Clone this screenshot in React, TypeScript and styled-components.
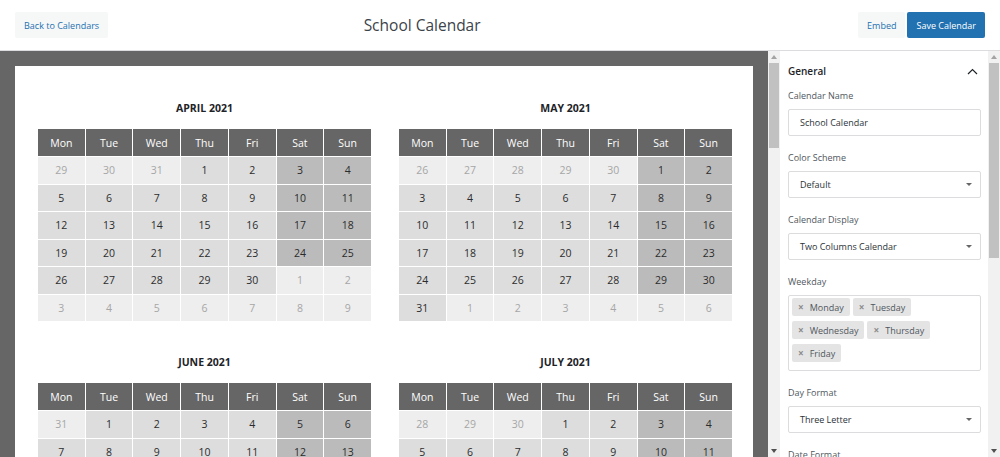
import React from "react";
import styled, { createGlobalStyle } from "styled-components";

const GlobalStyle = createGlobalStyle`
  html, body { margin: 0; padding: 0; }
  body {
    font-family: "Open Sans", "Liberation Sans", sans-serif;
    background: #fff;
    overflow: hidden;
  }
  * { box-sizing: border-box; }
`;

const Page = styled.div`
  width: 1000px;
  height: 457px;
  display: flex;
  flex-direction: column;
  overflow: hidden;
`;

const TopBar = styled.header`
  height: 51px;
  flex: none;
  display: flex;
  align-items: center;
  padding: 0 15px;
  border-bottom: 1px solid #dcdcde;
  background: #fff;
`;

const Button = styled.button<{ $primary?: boolean }>`
  height: 26px;
  padding: 0 9px;
  border: none;
  border-radius: 2px;
  font-family: "Open Sans", "Liberation Sans", sans-serif;
  font-size: 9px;
  background: ${(p) => (p.$primary ? "#2271b1" : "#f6f7f7")};
  color: ${(p) => (p.$primary ? "#ffffff" : "#2271b1")};
  cursor: pointer;
`;

const Title = styled.h1`
  flex: 1;
  margin: 0;
  padding-right: 122px;
  text-align: center;
  font-size: 15.5px;
  font-weight: 500;
  color: #3c434a;
`;

const ButtonGroup = styled.div`
  display: flex;
  gap: 2px;
`;

const Main = styled.div`
  flex: 1;
  display: flex;
  min-height: 0;
`;

const Preview = styled.div`
  flex: 1;
  background: #666666;
  padding: 15px 15px 0;
  overflow: hidden;
`;

const Paper = styled.div`
  background: #fff;
  min-height: 100%;
  padding: 34px 21px 40px 23px;
  display: grid;
  grid-template-columns: 1fr 1fr;
  column-gap: 28px;
  row-gap: 33px;
`;

const MonthBlock = styled.section``;

const MonthTitle = styled.h2`
  margin: 0 0 13px;
  text-align: center;
  font-size: 10.5px;
  line-height: 16px;
  font-weight: 700;
  color: #1d2327;
`;

const CalGrid = styled.div`
  display: grid;
  grid-template-columns: repeat(7, 1fr);
  gap: 1px;
  background: #fff;
`;

const HeadCell = styled.div`
  height: 27px;
  background: #666666;
  color: #fff;
  font-size: 10.5px;
  display: flex;
  align-items: center;
  justify-content: center;
`;

const DayCell = styled.div<{ $cur: boolean; $weekend: boolean }>`
  height: 26.5px;
  display: flex;
  align-items: center;
  justify-content: center;
  font-size: 10.5px;
  background: ${(p) => (!p.$cur ? "#eeeeee" : p.$weekend ? "#bbbbbb" : "#dddddd")};
  color: ${(p) => (p.$cur ? "#2c2c2c" : "#a6a6a6")};
`;

const ScrollTrack = styled.div`
  width: 12px;
  flex: none;
  background: #f1f1f1;
  display: flex;
  flex-direction: column;
`;

const ScrollButton = styled.div`
  height: 12px;
  flex: none;
  display: flex;
  align-items: center;
  justify-content: center;
`;

const ScrollThumb = styled.div<{ $size: number }>`
  height: ${(p) => p.$size}px;
  flex: none;
  margin: 0 1px;
  background: #c1c1c1;
`;

const ScrollSpacer = styled.div`
  flex: 1;
`;

const Sidebar = styled.aside`
  width: 208px;
  flex: none;
  background: #fff;
  padding: 12px 7px 0 8px;
  overflow: hidden;
`;

const PanelHeader = styled.div`
  display: flex;
  align-items: center;
  justify-content: space-between;
  height: 16px;
  margin-bottom: 10px;
  font-size: 10px;
  font-weight: 600;
  color: #1d2327;
  padding-right: 3px;
`;

const Field = styled.div`
  margin-bottom: 15px;
`;

const Label = styled.div`
  font-size: 9px;
  line-height: 14px;
  color: #50575e;
  margin-bottom: 6px;
`;

const TextInput = styled.input`
  display: block;
  width: 100%;
  height: 27px;
  border: 1px solid #dcdcde;
  border-radius: 2px;
  padding: 0 11px;
  font-family: "Open Sans", "Liberation Sans", sans-serif;
  font-size: 9px;
  color: #2c3338;
  background: #fff;
  outline: none;
`;

const SelectBox = styled.div`
  height: 27px;
  border: 1px solid #dcdcde;
  border-radius: 2px;
  padding: 0 8px 0 11px;
  display: flex;
  align-items: center;
  justify-content: space-between;
  font-size: 9px;
  color: #2c3338;
`;

const Caret = styled.span`
  width: 0;
  height: 0;
  border-left: 3px solid transparent;
  border-right: 3px solid transparent;
  border-top: 3px solid #666;
`;

const MultiBox = styled.div`
  height: 76px;
  margin-top: 1px;
  border: 1px solid #dcdcde;
  border-radius: 2px;
  padding: 2px 3px;
  display: flex;
  flex-wrap: wrap;
  align-content: flex-start;
  gap: 5px 3px;
`;

const Tag = styled.span`
  height: 18px;
  display: inline-flex;
  align-items: center;
  gap: 6px;
  padding: 0 6px;
  background: #e4e4e4;
  border-radius: 2px;
  font-size: 9px;
  color: #50575e;
`;

const TagX = styled.span`
  font-size: 10px;
  font-weight: 700;
  color: #8c8c8c;
`;

type Day = { n: number; cur: boolean; weekend: boolean };

function buildMonth(year: number, month: number): Day[] {
  const first = new Date(year, month, 1);
  const offset = (first.getDay() + 6) % 7;
  const dim = new Date(year, month + 1, 0).getDate();
  const prevDim = new Date(year, month, 0).getDate();
  const days: Day[] = [];
  for (let i = 0; i < 42; i++) {
    const weekend = i % 7 >= 5;
    if (i < offset) days.push({ n: prevDim - offset + 1 + i, cur: false, weekend });
    else if (i < offset + dim) days.push({ n: i - offset + 1, cur: true, weekend });
    else days.push({ n: i - offset - dim + 1, cur: false, weekend });
  }
  return days;
}

const WEEK = ["Mon", "Tue", "Wed", "Thu", "Fri", "Sat", "Sun"];
const MONTHS = [
  { label: "APRIL 2021", m: 3 },
  { label: "MAY 2021", m: 4 },
  { label: "JUNE 2021", m: 5 },
  { label: "JULY 2021", m: 6 },
];

const Arrow = ({ up, active }: { up?: boolean; active?: boolean }) => (
  <svg width="6" height="4" viewBox="0 0 6 4">
    <polygon
      points={up ? "0,4 6,4 3,0" : "0,0 6,0 3,4"}
      fill={active ? "#505050" : "#a3a3a3"}
    />
  </svg>
);

const Scrollbar = ({ thumb }: { thumb: number }) => (
  <ScrollTrack>
    <ScrollButton>
      <Arrow up />
    </ScrollButton>
    <ScrollThumb $size={thumb} />
    <ScrollSpacer />
    <ScrollButton>
      <Arrow active />
    </ScrollButton>
  </ScrollTrack>
);

const Chevron = () => (
  <svg width="11" height="7" viewBox="0 0 11 7">
    <polyline points="1,6 5.5,1.5 10,6" fill="none" stroke="#1d2327" strokeWidth="1.2" />
  </svg>
);

const Select = ({ value }: { value: string }) => (
  <SelectBox>
    <span>{value}</span>
    <Caret />
  </SelectBox>
);

export default function App() {
  return (
    <Page>
      <GlobalStyle />
      <TopBar>
        <Button>Back to Calendars</Button>
        <Title>School Calendar</Title>
        <ButtonGroup>
          <Button>Embed</Button>
          <Button $primary>Save Calendar</Button>
        </ButtonGroup>
      </TopBar>
      <Main>
        <Preview>
          <Paper>
            {MONTHS.map((mo) => (
              <MonthBlock key={mo.label}>
                <MonthTitle>{mo.label}</MonthTitle>
                <CalGrid>
                  {WEEK.map((w) => (
                    <HeadCell key={w}>{w}</HeadCell>
                  ))}
                  {buildMonth(2021, mo.m).map((d, i) => (
                    <DayCell key={i} $cur={d.cur} $weekend={d.weekend}>
                      {d.n}
                    </DayCell>
                  ))}
                </CalGrid>
              </MonthBlock>
            ))}
          </Paper>
        </Preview>
        <Scrollbar thumb={85} />
        <Sidebar>
          <PanelHeader>
            <span>General</span>
            <Chevron />
          </PanelHeader>
          <Field>
            <Label>Calendar Name</Label>
            <TextInput readOnly value="School Calendar" />
          </Field>
          <Field>
            <Label>Color Scheme</Label>
            <Select value="Default" />
          </Field>
          <Field>
            <Label>Calendar Display</Label>
            <Select value="Two Columns Calendar" />
          </Field>
          <Field>
            <Label>Weekday</Label>
            <MultiBox>
              {["Monday", "Tuesday", "Wednesday", "Thursday", "Friday"].map((d) => (
                <Tag key={d}>
                  <TagX>×</TagX>
                  {d}
                </Tag>
              ))}
            </MultiBox>
          </Field>
          <Field>
            <Label>Day Format</Label>
            <Select value="Three Letter" />
          </Field>
          <Field>
            <Label>Date Format</Label>
            <Select value="Default" />
          </Field>
        </Sidebar>
        <Scrollbar thumb={195} />
      </Main>
    </Page>
  );
}
